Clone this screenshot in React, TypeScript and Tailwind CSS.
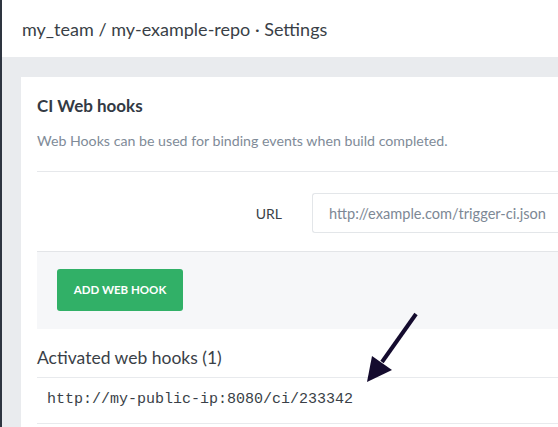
export default function App() {
  return (
    <div className="flex h-[427px] w-full flex-col overflow-hidden border-l-2 border-[#2e3540] font-['Lato',sans-serif] text-[#3a3f47]">
      <header className="flex h-[57px] shrink-0 items-center bg-white pl-[20px]">
        <h1 className="text-[18px] leading-none">my_team / my-example-repo · Settings</h1>
      </header>

      <main className="flex-1 bg-[#e9ebee] pl-[19px] pt-[20px]">
        <section className="h-full bg-white pl-4">
          <div className="pt-[20px] pb-[22px]">
            <h2 className="text-[17px] font-bold leading-[17px] text-[#333a44]">CI Web hooks</h2>
            <p className="mt-[19px] text-[14.2px] leading-[16px] text-[#808b98]">
              Web Hooks can be used for binding events when build completed.
            </p>
          </div>

          <div className="flex items-center border-t border-[#e6e8eb] pt-[21px] pb-[18px]">
            <label className="w-[245px] text-right text-[14px] text-[#3a3f47]">URL</label>
            <input
              type="text"
              placeholder="http://example.com/trigger-ci.json"
              className="ml-[30px] h-[40px] min-w-0 flex-1 rounded-l-[3px] border border-r-0 border-[#e3e6e9] pl-[16px] pr-0 text-[14.6px] text-[#3a3f47] placeholder-[#7d8895] outline-none"
            />
          </div>

          <div className="border-t border-[#e3e5e8] bg-[#f6f7f9] pl-[20px] pt-[17px] pb-[18px]">
            <button className="h-[42px] w-[126px] rounded-[3px] bg-[#31b067] text-[11.5px] font-bold text-white">
              ADD WEB HOOK
            </button>
          </div>

          <h3 className="pt-[19px] pb-[10px] text-[17.5px] leading-[19px]">Activated web hooks (1)</h3>
          <div className="flex h-[47px] items-center border-y border-[#e8eaed] pl-[10px] font-['Liberation_Mono',monospace] text-[15px] text-[#3a3f47]">
            http://my-public-ip:8080/ci/233342
          </div>
        </section>
      </main>

      {/* annotation arrow */}
      <svg className="pointer-events-none absolute left-0 top-0" width="558" height="427" viewBox="0 0 558 427">
        <line x1="416" y1="314" x2="382" y2="362" stroke="#140b2e" strokeWidth="4" />
        <polygon points="367,382 372,356 392,370" fill="#140b2e" />
      </svg>
    </div>
  );
}
